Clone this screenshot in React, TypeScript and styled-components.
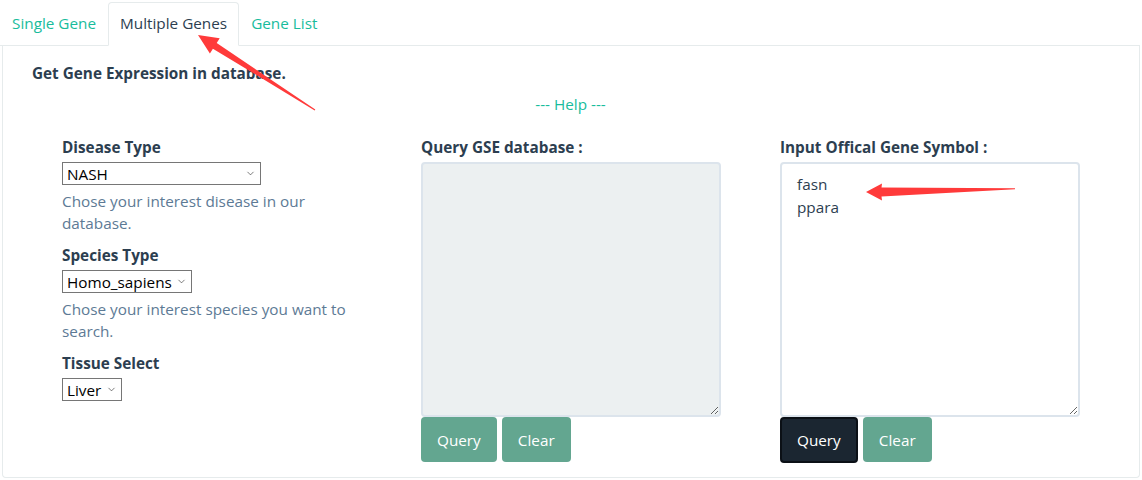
import React from 'react';
import styled, { createGlobalStyle } from 'styled-components';
import { ChevronDown } from 'lucide-react';

const GlobalStyle = createGlobalStyle`
  body {
    margin: 0;
    background: #ffffff;
    font-family: "Open Sans", "Noto Sans", sans-serif;
    font-size: 15.3px;
    color: #2c3e50;
  }
`;

const Page = styled.div`
  position: relative;
  width: 1140px;
  height: 480px;
  overflow: hidden;
`;

const TabBar = styled.ul`
  display: flex;
  margin: 0;
  padding: 2px 0 0 0;
  list-style: none;
  border-bottom: 1px solid #e6ebec;
`;

const Tab = styled.li<{ $active?: boolean }>`
  height: 42px;
  line-height: 40px;
  padding: 0 11px;
  margin-bottom: -1px;
  color: ${(p) => (p.$active ? '#2c3e50' : '#18bc9c')};
  background: ${(p) => (p.$active ? '#ffffff' : 'transparent')};
  border: 1px solid ${(p) => (p.$active ? '#e6ebec' : 'transparent')};
  border-bottom-color: ${(p) => (p.$active ? '#ffffff' : 'transparent')};
  border-radius: 4px 4px 0 0;
  cursor: pointer;
`;

const Card = styled.div`
  margin-left: 2px;
  height: 432px;
  box-sizing: border-box;
  border: 1px solid #e6ebec;
  border-top: none;
  border-radius: 0 0 4px 4px;
  padding: 16px 0 0 29px;
`;

const Title = styled.h4`
  margin: 0 0 9px 0;
  font-size: 15.3px;
  line-height: 22px;
  font-weight: 700;
`;

const HelpLink = styled.div`
  margin-left: -30px;
  text-align: center;
  color: #18bc9c;
  line-height: 22px;
  margin-bottom: 21px;
`;

const Columns = styled.div`
  display: grid;
  grid-template-columns: repeat(3, 359px);
  margin-left: 30px;
`;

const Column = styled.div`
  display: flex;
  flex-direction: column;
  align-items: flex-start;
`;

const Label = styled.label`
  font-weight: 700;
  line-height: 22px;
  margin-bottom: 4px;
`;

const SelectWrap = styled.div`
  position: relative;
  display: inline-flex;
  margin-bottom: 5px;

  svg {
    position: absolute;
    right: 5px;
    top: 6px;
    pointer-events: none;
    color: #333;
  }
`;

const Select = styled.select<{ $width?: number }>`
  appearance: none;
  height: 23px;
  box-sizing: border-box;
  width: ${(p) => (p.$width ? `${p.$width}px` : 'auto')};
  font-family: inherit;
  font-size: 15.3px;
  color: #000;
  border: 1px solid #767676;
  border-radius: 0;
  background: #fff;
  padding: 0 19px 0 4px;
  margin: 0;
  outline: none;
`;

const HelpText = styled.p`
  margin: 0 0 10px 0;
  width: 300px;
  line-height: 22px;
  color: #5d7a95;
`;

const TextArea = styled.textarea<{ $disabled?: boolean }>`
  width: 300px;
  height: 255px;
  box-sizing: border-box;
  margin: 0;
  padding: 9px 15px;
  border: 2px solid #dce4ec;
  border-radius: 4px;
  background: ${(p) => (p.$disabled ? '#ecf0f1' : '#ffffff')};
  font-family: inherit;
  font-size: 15.3px;
  line-height: 23px;
  color: #2c3e50;
  outline: none;
`;

const ButtonRow = styled.div`
  display: flex;
  gap: 5px;
`;

const Button = styled.button<{ $dark?: boolean }>`
  height: ${(p) => (p.$dark ? '46px' : '45px')};
  padding: 0 ${(p) => (p.$dark ? '15px' : '16px')};
  font-family: inherit;
  font-size: 15.3px;
  color: #ffffff;
  background: ${(p) => (p.$dark ? '#1b2631' : '#63a690')};
  border: ${(p) => (p.$dark ? '2px solid #0b1016' : 'none')};
  border-radius: 4px;
  cursor: pointer;
`;

const Annotations = styled.svg`
  position: absolute;
  left: 0;
  top: 0;
  pointer-events: none;
`;

const Dropdown: React.FC<{ value: string; width?: number }> = ({ value, width }) => (
  <SelectWrap>
    <Select $width={width} defaultValue={value}>
      <option>{value}</option>
    </Select>
    <ChevronDown size={11} strokeWidth={1.4} />
  </SelectWrap>
);

const App: React.FC = () => {
  return (
    <Page>
      <GlobalStyle />
      <TabBar>
        <Tab>Single Gene</Tab>
        <Tab $active>Multiple Genes</Tab>
        <Tab>Gene List</Tab>
      </TabBar>

      <Card>
        <Title>Get Gene Expression in database.</Title>
        <HelpLink>--- Help ---</HelpLink>

        <Columns>
          <Column>
            <Label>Disease Type</Label>
            <Dropdown value="NASH" width={199} />
            <HelpText>Chose your interest disease in our database.</HelpText>

            <Label>Species Type</Label>
            <Dropdown value="Homo_sapiens" />
            <HelpText>Chose your interest species you want to search.</HelpText>

            <Label>Tissue Select</Label>
            <Dropdown value="Liver" />
          </Column>

          <Column>
            <Label>Query GSE database :</Label>
            <TextArea $disabled readOnly />
            <ButtonRow>
              <Button>Query</Button>
              <Button>Clear</Button>
            </ButtonRow>
          </Column>

          <Column>
            <Label>Input Offical Gene Symbol :</Label>
            <TextArea defaultValue={'fasn\nppara'} />
            <ButtonRow>
              <Button $dark>Query</Button>
              <Button>Clear</Button>
            </ButtonRow>
          </Column>
        </Columns>
      </Card>

      {/* red annotation arrows */}
      <Annotations width="1142" height="480">
        <polygon
          fill="#ff3a3a"
          points="198,35 219.7,38.2 216.7,42.9 315.3,109.6 314.7,110.4 212.9,48.7 209.9,53.4"
        />
        <polygon
          fill="#ff3a3a"
          points="866,192 882,183.5 881.5,187.5 1015,188.3 1015,189.3 881.5,196.5 882,200.5"
        />
      </Annotations>
    </Page>
  );
};

export default App;
